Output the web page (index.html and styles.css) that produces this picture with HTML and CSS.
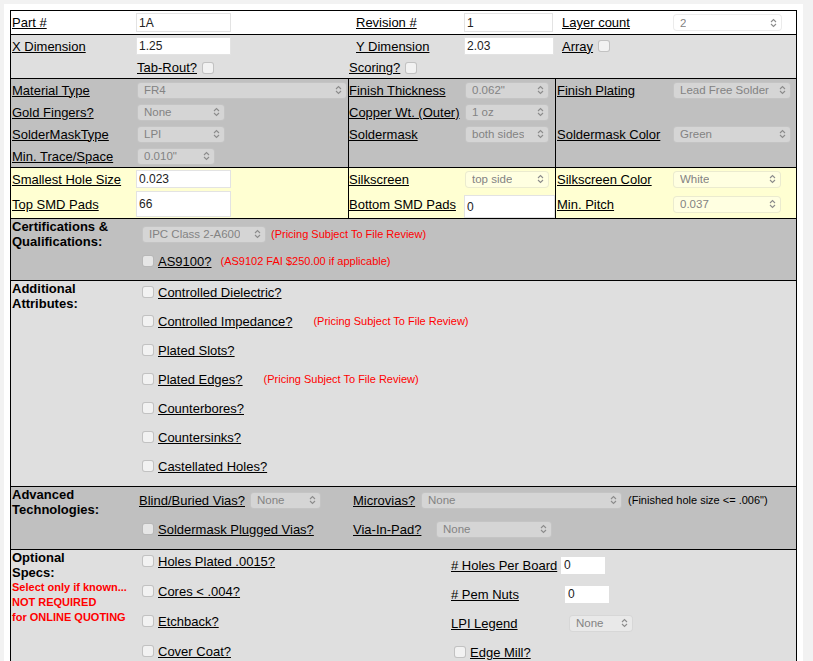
FILE: index.html
```html
<!DOCTYPE html>
<html>
<head>
<meta charset="utf-8">
<title>PCB Quote Options</title>
<link rel="stylesheet" href="styles.css">
</head>
<body>
<div class="page">
  <div class="form">

    <!-- Row 1 -->
    <div class="sec g6 s1">
      <div class="cell p1"><a href="#" class="lk">Part #</a></div>
      <div class="cell"><input class="inp w95 h19 ml1" type="text" value="1A"></div>
      <div class="cell p8"><a href="#" class="lk">Revision #</a></div>
      <div class="cell"><input class="inp w89 h19" type="text" value="1"></div>
      <div class="cell p7"><a href="#" class="lk">Layer count</a></div>
      <div class="cell"><span class="sel w109 ml1"><span>2</span><svg class="chev" viewBox="0 0 7 10"><path d="M1 4 L3.5 1.5 L6 4 M1 6 L3.5 8.5 L6 6"/></svg></span></div>
    </div>

    <!-- Row 2 -->
    <div class="sec g6 s2">
      <div class="cell p1"><a href="#" class="lk">X Dimension</a></div>
      <div class="cell"><input class="inp w95 h18 ml1" type="text" value="1.25"></div>
      <div class="cell p8"><a href="#" class="lk">Y Dimension</a></div>
      <div class="cell"><input class="inp w90 h18" type="text" value="2.03"></div>
      <div class="cell p7"><a href="#" class="lk">Array</a><input type="checkbox" class="cb ml5"></div>
      <div class="cell"></div>
      <div class="cell"></div>
      <div class="cell p1"><a href="#" class="lk">Tab-Rout?</a><input type="checkbox" class="cb ml5"></div>
      <div class="cell p1 span4"><a href="#" class="lk">Scoring?</a><input type="checkbox" class="cb ml5"></div>
    </div>

    <!-- Row 3 -->
    <div class="sec cols s3">
      <div class="colA">
        <div class="cell p1"><a href="#" class="lk">Material Type</a></div>
        <div class="cell"><span class="sel w210 ml1"><span>FR4</span><svg class="chev" viewBox="0 0 7 10"><path d="M1 4 L3.5 1.5 L6 4 M1 6 L3.5 8.5 L6 6"/></svg></span></div>
        <div class="cell p1"><a href="#" class="lk">Gold Fingers?</a></div>
        <div class="cell"><span class="sel w88 ml1"><span>None</span><svg class="chev" viewBox="0 0 7 10"><path d="M1 4 L3.5 1.5 L6 4 M1 6 L3.5 8.5 L6 6"/></svg></span></div>
        <div class="cell p1"><a href="#" class="lk">SolderMaskType</a></div>
        <div class="cell"><span class="sel w88 ml1"><span>LPI</span><svg class="chev" viewBox="0 0 7 10"><path d="M1 4 L3.5 1.5 L6 4 M1 6 L3.5 8.5 L6 6"/></svg></span></div>
        <div class="cell p1"><a href="#" class="lk">Min. Trace/Space</a></div>
        <div class="cell"><span class="sel w78 ml1"><span>0.010"</span><svg class="chev" viewBox="0 0 7 10"><path d="M1 4 L3.5 1.5 L6 4 M1 6 L3.5 8.5 L6 6"/></svg></span></div>
      </div>
      <div class="colB">
        <div class="cell"><a href="#" class="lk">Finish Thickness</a></div>
        <div class="cell"><span class="sel w84 ml1"><span>0.062"</span><svg class="chev" viewBox="0 0 7 10"><path d="M1 4 L3.5 1.5 L6 4 M1 6 L3.5 8.5 L6 6"/></svg></span></div>
        <div class="cell"><a href="#" class="lk">Copper Wt. (Outer)</a></div>
        <div class="cell"><span class="sel w84 ml1"><span>1 oz</span><svg class="chev" viewBox="0 0 7 10"><path d="M1 4 L3.5 1.5 L6 4 M1 6 L3.5 8.5 L6 6"/></svg></span></div>
        <div class="cell"><a href="#" class="lk">Soldermask</a></div>
        <div class="cell"><span class="sel w84 ml1"><span>both sides</span><svg class="chev" viewBox="0 0 7 10"><path d="M1 4 L3.5 1.5 L6 4 M1 6 L3.5 8.5 L6 6"/></svg></span></div>
        <div class="cell"></div>
        <div class="cell"></div>
      </div>
      <div class="colC">
        <div class="cell p1"><a href="#" class="lk">Finish Plating</a></div>
        <div class="cell"><span class="sel w118 ml1"><span>Lead Free Solder</span><svg class="chev" viewBox="0 0 7 10"><path d="M1 4 L3.5 1.5 L6 4 M1 6 L3.5 8.5 L6 6"/></svg></span></div>
        <div class="cell"></div>
        <div class="cell"></div>
        <div class="cell p1"><a href="#" class="lk">Soldermask Color</a></div>
        <div class="cell"><span class="sel w118 ml1"><span>Green</span><svg class="chev" viewBox="0 0 7 10"><path d="M1 4 L3.5 1.5 L6 4 M1 6 L3.5 8.5 L6 6"/></svg></span></div>
        <div class="cell"></div>
        <div class="cell"></div>
      </div>
    </div>

    <!-- Row 4 -->
    <div class="sec cols s4">
      <div class="colA">
        <div class="cell p1"><a href="#" class="lk">Smallest Hole Size</a></div>
        <div class="cell"><input class="inp w95 h18 ml1" type="text" value="0.023"></div>
        <div class="cell p1"><a href="#" class="lk">Top SMD Pads</a></div>
        <div class="cell"><input class="inp w95 h26 ml1" type="text" value="66"></div>
      </div>
      <div class="colB">
        <div class="cell"><a href="#" class="lk">Silkscreen</a></div>
        <div class="cell"><span class="sel w84 ml1"><span>top side</span><svg class="chev" viewBox="0 0 7 10"><path d="M1 4 L3.5 1.5 L6 4 M1 6 L3.5 8.5 L6 6"/></svg></span></div>
        <div class="cell"><a href="#" class="lk">Bottom SMD Pads</a></div>
        <div class="cell bottom"><input class="inp w91 h23" type="text" value="0"></div>
      </div>
      <div class="colC">
        <div class="cell p1"><a href="#" class="lk">Silkscreen Color</a></div>
        <div class="cell"><span class="sel w108 ml1"><span>White</span><svg class="chev" viewBox="0 0 7 10"><path d="M1 4 L3.5 1.5 L6 4 M1 6 L3.5 8.5 L6 6"/></svg></span></div>
        <div class="cell p1"><a href="#" class="lk">Min. Pitch</a></div>
        <div class="cell"><span class="sel w108 ml1"><span>0.037</span><svg class="chev" viewBox="0 0 7 10"><path d="M1 4 L3.5 1.5 L6 4 M1 6 L3.5 8.5 L6 6"/></svg></span></div>
      </div>
    </div>

    <!-- Certifications -->
    <div class="sec sx s5">
      <div class="ttl">Certifications &amp;<br>Qualifications:</div>
      <div class="body b5">
        <div class="row"><span class="sel w124 ml3"><span>IPC Class 2-A600</span><svg class="chev" viewBox="0 0 7 10"><path d="M1 4 L3.5 1.5 L6 4 M1 6 L3.5 8.5 L6 6"/></svg></span><span class="note ml5">(Pricing Subject To File Review)</span></div>
        <div class="row"><input type="checkbox" class="cb ml3"><a href="#" class="lk ml4">AS9100?</a><span class="note ml9">(AS9102 FAI $250.00 if applicable)</span></div>
      </div>
    </div>

    <!-- Additional Attributes -->
    <div class="sec sx s6">
      <div class="ttl">Additional<br>Attributes:</div>
      <div class="body b6">
        <div class="row"><input type="checkbox" class="cb ml3"><a href="#" class="lk ml4">Controlled Dielectric?</a></div>
        <div class="row"><input type="checkbox" class="cb ml3"><a href="#" class="lk ml4">Controlled Impedance?</a><span class="note ml21">(Pricing Subject To File Review)</span></div>
        <div class="row"><input type="checkbox" class="cb ml3"><a href="#" class="lk ml4">Plated Slots?</a></div>
        <div class="row"><input type="checkbox" class="cb ml3"><a href="#" class="lk ml4">Plated Edges?</a><span class="note ml21">(Pricing Subject To File Review)</span></div>
        <div class="row"><input type="checkbox" class="cb ml3"><a href="#" class="lk ml4">Counterbores?</a></div>
        <div class="row"><input type="checkbox" class="cb ml3"><a href="#" class="lk ml4">Countersinks?</a></div>
        <div class="row"><input type="checkbox" class="cb ml3"><a href="#" class="lk ml4">Castellated Holes?</a></div>
      </div>
    </div>

    <!-- Advanced Technologies -->
    <div class="sec sx s7">
      <div class="ttl">Advanced<br>Technologies:</div>
      <div class="body b7">
        <div class="row"><span class="lw111"><a href="#" class="lk">Blind/Buried Vias?</a></span><span class="sel w71"><span>None</span><svg class="chev" viewBox="0 0 7 10"><path d="M1 4 L3.5 1.5 L6 4 M1 6 L3.5 8.5 L6 6"/></svg></span></div>
        <div class="row"><span class="lw68"><a href="#" class="lk">Microvias?</a></span><span class="sel w201"><span>None</span><svg class="chev" viewBox="0 0 7 10"><path d="M1 4 L3.5 1.5 L6 4 M1 6 L3.5 8.5 L6 6"/></svg></span><span class="note black ml6">(Finished hole size &lt;= .006")</span></div>
        <div class="row"><input type="checkbox" class="cb ml3"><a href="#" class="lk ml4">Soldermask Plugged Vias?</a></div>
        <div class="row"><span class="lw83"><a href="#" class="lk">Via-In-Pad?</a></span><span class="sel w116"><span>None</span><svg class="chev" viewBox="0 0 7 10"><path d="M1 4 L3.5 1.5 L6 4 M1 6 L3.5 8.5 L6 6"/></svg></span></div>
      </div>
    </div>

    <!-- Optional Specs -->
    <div class="sec sx s8">
      <div class="ttl">Optional<br>Specs:<div class="warn">Select only if known...<br>NOT REQUIRED<br>for ONLINE QUOTING</div></div>
      <div class="body b8">
        <div class="optL">
          <div class="row"><input type="checkbox" class="cb ml3"><a href="#" class="lk ml4">Holes Plated .0015?</a></div>
          <div class="row"><input type="checkbox" class="cb ml3"><a href="#" class="lk ml4">Cores &lt; .004?</a></div>
          <div class="row"><input type="checkbox" class="cb ml3"><a href="#" class="lk ml4">Etchback?</a></div>
          <div class="row"><input type="checkbox" class="cb ml3"><a href="#" class="lk ml4">Cover Coat?</a></div>
        </div>
        <div class="optR">
          <div class="row"><span class="lw110"><a href="#" class="lk"># Holes Per Board</a></span><input class="inp w44 h17 nob" type="text" value="0"></div>
          <div class="row"><span class="lw114"><a href="#" class="lk"># Pem Nuts</a></span><input class="inp w44 h17 nob" type="text" value="0"></div>
          <div class="row"><span class="lw118"><a href="#" class="lk">LPI Legend</a></span><span class="sel w64"><span>None</span><svg class="chev" viewBox="0 0 7 10"><path d="M1 4 L3.5 1.5 L6 4 M1 6 L3.5 8.5 L6 6"/></svg></span></div>
          <div class="row"><input type="checkbox" class="cb ml3"><a href="#" class="lk ml4">Edge Mill?</a></div>
        </div>
      </div>
    </div>

  </div>
</div>
</body>
</html>
```

FILE: styles.css
```css
html, body {
  margin: 0;
  padding: 0;
  height: 661px;
  overflow: hidden;
  background: #f2f2f2;
}
body {
  font-family: "Liberation Sans", Arial, Helvetica, sans-serif;
  font-size: 13px;
  color: #000;
}
.page {
  margin: 4px 0 0 4px;
  width: 787px;
  height: 651px;
  padding: 6px 6px 0 6px;
  background: #fff;
  overflow: hidden;
}
.form {
  width: 785px;
  border: 1px solid #000;
}
.sec { border-top: 1px solid #000; }
.sec:first-child { border-top: 0; }

.lk { color: #000; text-decoration: underline; }

.cell {
  display: flex;
  align-items: center;
  white-space: nowrap;
  min-width: 0;
}
.bottom { align-items: flex-end; align-self: stretch; }
.span4 { grid-column: span 4; }

.p1 { padding-left: 1px; }
.p7 { padding-left: 7px; }
.p8 { padding-left: 8px; }
.ml1 { margin-left: 1px; }
.ml3 { margin-left: 3px; }
.ml4 { margin-left: 4px; }
.ml5 { margin-left: 5px; }
.ml6 { margin-left: 6px; }
.ml9 { margin-left: 9px; }
.ml21 { margin-left: 21px; }

/* six column grid */
.g6 {
  display: grid;
  grid-template-columns: 125px 212px 116px 91px 117px 124px;
  align-items: stretch;
}
.s1 { background: #fff; grid-template-rows: 23px; }
.s2 { background: #dfdfdf; grid-template-rows: 22px 21px; }

/* three column blocks */
.cols { display: flex; }
.colA, .colB, .colC { display: grid; align-items: stretch; }
.colA { width: 337px; grid-template-columns: 125px 212px; }
.colB { width: 206px; border-left: 1px solid #000; grid-template-columns: 115px 91px; }
.colC { width: 240px; border-left: 1px solid #000; grid-template-columns: 116px 124px; }
.s3 { background: #c0c0c0; }
.s3 .colA, .s3 .colB, .s3 .colC { grid-template-rows: repeat(4, 22px); }
.s4 { background: #ffffd2; }
.s4 .colA, .s4 .colB, .s4 .colC { grid-template-rows: 22px 28px; }

/* inputs */
.inp {
  box-sizing: border-box;
  margin: 0;
  padding: 0 2px;
  border: 1px solid #e3e3e3;
  border-radius: 0;
  background: #fff;
  font-family: "Liberation Sans", Arial, Helvetica, sans-serif;
  font-size: 12px;
  color: #222;
  outline: none;
}
.nob { border-color: #fff; }
.w44 { width: 44px; }
.w89 { width: 89px; }
.w90 { width: 90px; }
.w91 { width: 91px; }
.w95 { width: 95px; }
.h17 { height: 17px; }
.h18 { height: 18px; }
.h19 { height: 19px; }
.h23 { height: 23px; }
.h26 { height: 26px; }

/* select look-alike */
.sel {
  box-sizing: border-box;
  display: inline-flex;
  align-items: center;
  justify-content: space-between;
  height: 17px;
  padding: 0 4px 0 6px;
  border: 1px solid rgba(0, 0, 0, 0.08);
  border-radius: 4px;
  background: rgba(255, 255, 255, 0.33);
  color: #838383;
  font-size: 11.5px;
  white-space: nowrap;
  overflow: hidden;
  flex: none;
}
.sel > span { overflow: hidden; }
.chev {
  width: 7px;
  height: 10px;
  flex: none;
  margin-left: 3px;
  fill: none;
  stroke: #8c8c8c;
  stroke-width: 1.1;
}
.w64 { width: 64px; }
.w71 { width: 71px; }
.w78 { width: 78px; }
.w84 { width: 84px; }
.w88 { width: 88px; }
.w108 { width: 108px; }
.w109 { width: 109px; }
.w116 { width: 116px; }
.w118 { width: 118px; }
.w124 { width: 124px; }
.w201 { width: 201px; }
.w210 { width: 210px; }

/* checkbox */
.cb {
  -webkit-appearance: none;
  appearance: none;
  box-sizing: border-box;
  width: 12px;
  height: 12px;
  margin-top: 0;
  margin-bottom: 0;
  margin-right: 0;
  border: 1px solid rgba(0, 0, 0, 0.2);
  border-radius: 3px;
  background: rgba(255, 255, 255, 0.6);
  flex: none;
}

/* titled sections */
.sx { display: flex; }
.ttl {
  box-sizing: border-box;
  width: 128px;
  flex: none;
  padding-left: 1px;
  font-weight: bold;
  line-height: 15px;
}
.warn {
  color: #f00;
  font-size: 11px;
  line-height: 15px;
}
.body { flex: 1; min-width: 0; }
.row {
  display: flex;
  align-items: center;
  height: 22px;
  white-space: nowrap;
}
.note { color: #f00; font-size: 11px; }
.note.black { color: #000; }

.s5 { background: #c0c0c0; height: 61px; }
.b5 {
  display: flex;
  flex-direction: column;
  gap: 5px;
  padding-top: 4px;
}
.s6 { background: #dfdfdf; height: 205px; }
.b6 {
  display: flex;
  flex-direction: column;
  gap: 7px;
}
.s7 { background: #c0c0c0; height: 62px; }
.b7 {
  display: grid;
  grid-template-columns: 214px 1fr;
  grid-auto-rows: 22px;
  row-gap: 7px;
  padding-top: 2px;
}
.s8 { background: #dfdfdf; height: 160px; }
.b8 { display: flex; }
.optL {
  width: 312px;
  display: flex;
  flex-direction: column;
  gap: 8px;
}
.optR {
  display: flex;
  flex-direction: column;
  gap: 7px;
  padding-top: 4px;
}
.lw68 { width: 68px; flex: none; }
.lw83 { width: 83px; flex: none; }
.lw110 { width: 110px; flex: none; }
.lw111 { width: 111px; flex: none; }
.lw114 { width: 114px; flex: none; }
.lw118 { width: 118px; flex: none; }
```
